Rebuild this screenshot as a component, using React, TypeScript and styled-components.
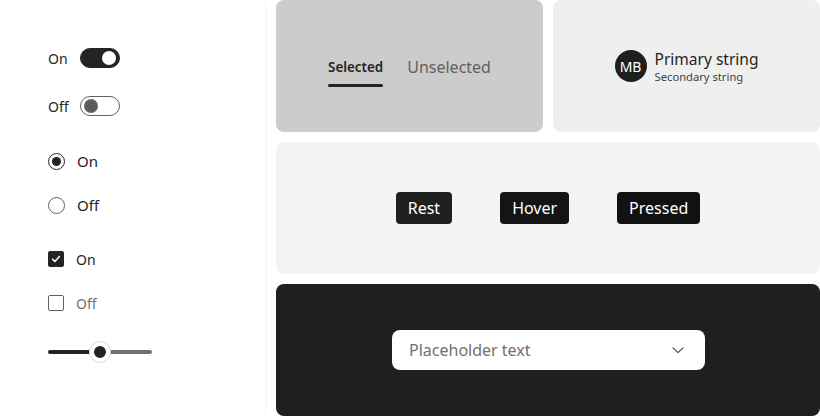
import React from 'react';
import styled, { createGlobalStyle } from 'styled-components';

const GlobalStyle = createGlobalStyle`
  html, body {
    margin: 0;
    padding: 0;
    background: #ffffff;
  }
  body {
    font-family: 'Noto Sans', 'Open Sans', sans-serif;
    color: #242424;
  }
`;

export default function App() {
  return (
    <>
      <GlobalStyle />
      <Page>
        <ControlsPanel>
          <ToggleGroup>
            <ToggleRow>
              <ToggleLabel>On</ToggleLabel>
              <Track $on>
                <Thumb $on />
              </Track>
            </ToggleRow>
            <ToggleRow>
              <ToggleLabel>Off</ToggleLabel>
              <Track>
                <Thumb />
              </Track>
            </ToggleRow>
          </ToggleGroup>

          <ChoiceGroup $top={23}>
            <ChoiceRow>
              <Radio $checked />
              <RadioLabel>On</RadioLabel>
            </ChoiceRow>
            <ChoiceRow>
              <Radio />
              <RadioLabel>Off</RadioLabel>
            </ChoiceRow>
          </ChoiceGroup>

          <ChoiceGroup $top={10}>
            <ChoiceRow>
              <Checkbox $checked>
                <svg width="12" height="12" viewBox="0 0 12 12">
                  <path d="M2.6 6.2 L4.9 8.4 L9.4 3.6" fill="none" stroke="#fff" strokeWidth="1.5" strokeLinecap="round" strokeLinejoin="round" />
                </svg>
              </Checkbox>
              <CheckLabel>On</CheckLabel>
            </ChoiceRow>
            <ChoiceRow>
              <Checkbox />
              <CheckLabel $muted>Off</CheckLabel>
            </ChoiceRow>
          </ChoiceGroup>

          <Slider>
            <SliderFill />
            <SliderKnob />
            <SliderRest />
          </Slider>
        </ControlsPanel>

        <Cards>
          <Card $bg="#cccccc">
            <TabList>
              <Tab $selected>Selected</Tab>
              <Tab>Unselected</Tab>
            </TabList>
          </Card>
          <Card $bg="#efefef">
            <Persona>
              <Avatar>MB</Avatar>
              <PersonaText>
                <Primary>Primary string</Primary>
                <Secondary>Secondary string</Secondary>
              </PersonaText>
            </Persona>
          </Card>
          <Card $bg="#f3f3f3" $wide>
            <ButtonRow>
              <DarkButton $bg="#1f1f1f">Rest</DarkButton>
              <DarkButton $bg="#141414">Hover</DarkButton>
              <DarkButton $bg="#111111">Pressed</DarkButton>
            </ButtonRow>
          </Card>
          <Card $bg="#1f1f1f" $wide>
            <Dropdown>
              <Placeholder>Placeholder text</Placeholder>
              <svg width="14" height="14" viewBox="0 0 14 14">
                <path d="M2 4.8 L7 9.6 L12 4.8" fill="none" stroke="#424242" strokeWidth="1.1" strokeLinecap="round" strokeLinejoin="round" />
              </svg>
            </Dropdown>
          </Card>
        </Cards>
      </Page>
    </>
  );
}

const Page = styled.div`
  width: 820px;
  height: 416px;
  display: grid;
  grid-template-columns: 266px 1fr;
  column-gap: 10px;
  overflow: hidden;
`;

const ControlsPanel = styled.div`
  background: #ffffff;
  border-radius: 8px;
  box-shadow: 1px 0 0 #f6f6f6;
  display: flex;
  flex-direction: column;
  padding: 48px 0 0 48px;
`;

const ToggleGroup = styled.div`
  display: flex;
  flex-direction: column;
  gap: 28px;
`;

const ToggleRow = styled.div`
  display: flex;
  align-items: center;
  height: 20px;
  gap: 12px;
`;

const ToggleLabel = styled.span`
  width: 20px;
  font-size: 14px;
  line-height: 20px;
  padding-top: 2px;
  color: #242424;
`;

const Track = styled.div<{ $on?: boolean }>`
  box-sizing: border-box;
  width: 40px;
  height: 20px;
  border-radius: 10px;
  display: flex;
  align-items: center;
  padding: 0 3px;
  justify-content: ${(p) => (p.$on ? 'flex-end' : 'flex-start')};
  background: ${(p) => (p.$on ? '#242424' : '#ffffff')};
  border: 1px solid ${(p) => (p.$on ? '#242424' : '#616161')};
`;

const Thumb = styled.div<{ $on?: boolean }>`
  width: 14px;
  height: 14px;
  border-radius: 50%;
  background: ${(p) =>
    p.$on ? '#ffffff' : 'radial-gradient(circle, #5a5a5a 0 40%, #6e6e6e 100%)'};
`;

const ChoiceGroup = styled.div<{ $top: number }>`
  display: flex;
  flex-direction: column;
  margin-top: ${(p) => p.$top}px;
`;

const ChoiceRow = styled.div`
  display: flex;
  align-items: center;
  height: 44px;
  gap: 12px;
`;

const Radio = styled.div<{ $checked?: boolean }>`
  box-sizing: border-box;
  width: 17px;
  height: 17px;
  border-radius: 50%;
  border: 1px solid ${(p) => (p.$checked ? '#242424' : '#616161')};
  display: flex;
  align-items: center;
  justify-content: center;

  &::after {
    content: '';
    display: ${(p) => (p.$checked ? 'block' : 'none')};
    width: 9px;
    height: 9px;
    border-radius: 50%;
    background: #242424;
  }
`;

const RadioLabel = styled.span`
  font-size: 15px;
  color: #242424;
`;

const Checkbox = styled.div<{ $checked?: boolean }>`
  box-sizing: border-box;
  width: 16px;
  height: 16px;
  border-radius: 2px;
  display: flex;
  align-items: center;
  justify-content: center;
  background: ${(p) => (p.$checked ? '#242424' : '#ffffff')};
  border: 1px solid ${(p) => (p.$checked ? '#242424' : '#616161')};
`;

const CheckLabel = styled.span<{ $muted?: boolean }>`
  font-size: 14px;
  color: ${(p) => (p.$muted ? '#707070' : '#242424')};
`;

const Slider = styled.div`
  display: flex;
  align-items: center;
  width: 104px;
  height: 20px;
  margin-top: 17px;
`;

const SliderFill = styled.div`
  width: 43px;
  height: 4px;
  border-radius: 2px 0 0 2px;
  background: #242424;
`;

const SliderKnob = styled.div`
  box-sizing: border-box;
  width: 20px;
  height: 20px;
  border-radius: 50%;
  background: #242424;
  border: 4px solid #ffffff;
  box-shadow: 0 0 0 1px #e0e0e0;
  margin: 0 -1px;
  position: relative;
  z-index: 1;
`;

const SliderRest = styled.div`
  flex: 1;
  height: 4px;
  border-radius: 0 2px 2px 0;
  background: #707070;
`;

const Cards = styled.div`
  display: grid;
  grid-template-columns: 1fr 1fr;
  grid-template-rows: 1fr 1fr 1fr;
  gap: 10px;
`;

const Card = styled.div<{ $bg: string; $wide?: boolean }>`
  background: ${(p) => p.$bg};
  border-radius: 8px;
  grid-column: ${(p) => (p.$wide ? '1 / span 2' : 'auto')};
  display: flex;
  align-items: center;
  justify-content: center;
`;

const TabList = styled.div`
  display: flex;
  align-items: center;
  gap: 24px;
  margin-top: 2px;
`;

const Tab = styled.div<{ $selected?: boolean }>`
  position: relative;
  font-size: ${(p) => (p.$selected ? '13.4px' : '16px')};
  font-weight: ${(p) => (p.$selected ? 600 : 400)};
  color: ${(p) => (p.$selected ? '#242424' : '#616161')};
  line-height: 22px;

  &::after {
    content: '';
    display: ${(p) => (p.$selected ? 'block' : 'none')};
    position: absolute;
    left: 0;
    right: 0;
    bottom: -9px;
    height: 3px;
    border-radius: 2px;
    background: #242424;
  }
`;

const Persona = styled.div`
  display: flex;
  align-items: center;
  gap: 8px;
`;

const Avatar = styled.div`
  width: 32px;
  height: 32px;
  border-radius: 50%;
  background: #1f1f1f;
  color: #ffffff;
  font-size: 14px;
  display: flex;
  align-items: center;
  justify-content: center;
`;

const PersonaText = styled.div`
  display: flex;
  flex-direction: column;
  gap: 1px;
  margin-top: 1px;
`;

const Primary = styled.span`
  font-size: 15.5px;
  line-height: 20px;
  color: #242424;
`;

const Secondary = styled.span`
  font-size: 11.2px;
  line-height: 14px;
  color: #424242;
`;

const ButtonRow = styled.div`
  display: flex;
  align-items: center;
  gap: 48px;
`;

const DarkButton = styled.button<{ $bg: string }>`
  font-family: inherit;
  font-size: 16px;
  color: #ffffff;
  background: ${(p) => p.$bg};
  border: none;
  border-radius: 4px;
  height: 32px;
  padding: 0 12px;
`;

const Dropdown = styled.div`
  box-sizing: border-box;
  width: 313px;
  height: 40px;
  background: #ffffff;
  border-radius: 8px;
  display: flex;
  align-items: center;
  justify-content: space-between;
  padding: 0 20px 0 17px;
  margin-left: 1px;
`;

const Placeholder = styled.span`
  font-size: 16px;
  color: #707070;
`;
